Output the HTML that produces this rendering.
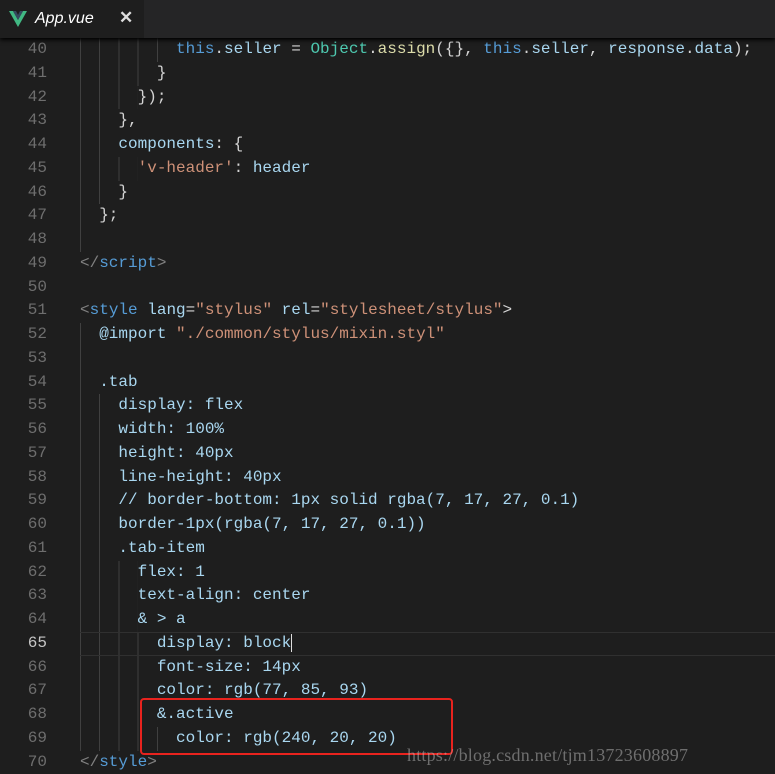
<!DOCTYPE html>
<html><head><meta charset="utf-8"><style>
body{margin:0;width:775px;height:770px;background:#1e1e1e;overflow:hidden;position:relative;font-family:"Liberation Mono",monospace;}
#tabs{position:absolute;left:0;top:0;width:775px;height:38px;background:#252526;box-shadow:0 2px 4px #000;z-index:2}
#tab{position:absolute;left:0;top:0;width:144px;height:38px;background:#1e1e1e;}
#tab .n{position:absolute;left:35px;top:10px;font:italic 16px "Liberation Sans",sans-serif;color:#fff}
#tab .x{position:absolute;left:119px;top:8px;font:bold 17px "Liberation Sans",sans-serif;color:#ddd}
#code{position:absolute;left:0;top:38px;width:775px}
.l{height:23.76px;line-height:23.76px;font-size:16px;white-space:pre;position:relative;color:#d4d4d4;
background:repeating-linear-gradient(to right,#404040 0 1px,transparent 1px 19.2px) no-repeat 80px 0;background-size:calc(var(--g,0)*9.6px) 100%}
.ln{position:absolute;left:0;width:47px;text-align:right;color:#6e6e6e}
.t{position:absolute;left:80px}
.k{color:#569cd6}.p{color:#a9d7f0}.c{color:#4ec9b0}.f{color:#dcdcaa}.s{color:#ce9178}.g{color:#808080}.b{color:#d7ba7d}
.cur{box-shadow:inset 0 1px #303030,inset 0 -1px #303030}
</style></head><body>
<div id="tabs"><div id="tab">
<svg style="position:absolute;left:9px;top:11px" width="18" height="16" viewBox="0 0 18 16"><path d="M0 0h4l5 9 5-9h4L9 16z" fill="#41b883"/><path d="M4 0h3l2 4 2-4h3L9 9z" fill="#35495e"/></svg>
<span class="n">App.vue</span><span class="x">✕</span></div></div>
<div id="code">
<div class="l" style="--g:10"><span class="ln">40</span><span class="t">          <span class="k">this</span>.<span class="p">seller</span> = <span class="c">Object</span>.<span class="f">assign</span>({}, <span class="k">this</span>.<span class="p">seller</span>, <span class="p">response</span>.<span class="p">data</span>);</span></div>
<div class="l" style="--g:8"><span class="ln">41</span><span class="t">        }</span></div>
<div class="l" style="--g:6"><span class="ln">42</span><span class="t">      });</span></div>
<div class="l" style="--g:4"><span class="ln">43</span><span class="t">    },</span></div>
<div class="l" style="--g:4"><span class="ln">44</span><span class="t">    <span class="p">components</span>: {</span></div>
<div class="l" style="--g:6"><span class="ln">45</span><span class="t">      <span class="s">'v-header'</span>: <span class="p">header</span></span></div>
<div class="l" style="--g:4"><span class="ln">46</span><span class="t">    }</span></div>
<div class="l" style="--g:2"><span class="ln">47</span><span class="t">  };</span></div>
<div class="l" style="--g:2"><span class="ln">48</span></div>
<div class="l"><span class="ln">49</span><span class="t"><span class="g">&lt;/</span><span class="k">script</span><span class="g">&gt;</span></span></div>
<div class="l"><span class="ln">50</span></div>
<div class="l"><span class="ln">51</span><span class="t"><span class="g">&lt;</span><span class="k">style</span> <span class="p">lang</span>=<span class="s">"stylus"</span> <span class="p">rel</span>=<span class="s">"stylesheet/stylus"</span>&gt;</span></div>
<div class="l" style="--g:2"><span class="ln">52</span><span class="t">  <span class="p">@import</span> <span class="s">"./common/stylus/mixin.styl"</span></span></div>
<div class="l" style="--g:2"><span class="ln">53</span></div>
<div class="l" style="--g:2"><span class="ln">54</span><span class="t p">  .tab</span></div>
<div class="l" style="--g:4"><span class="ln">55</span><span class="t p">    display: flex</span></div>
<div class="l" style="--g:4"><span class="ln">56</span><span class="t p">    width: 100%</span></div>
<div class="l" style="--g:4"><span class="ln">57</span><span class="t p">    height: 40px</span></div>
<div class="l" style="--g:4"><span class="ln">58</span><span class="t p">    line-height: 40px</span></div>
<div class="l" style="--g:4"><span class="ln">59</span><span class="t p">    // border-bottom: 1px solid rgba(7, 17, 27, 0.1)</span></div>
<div class="l" style="--g:4"><span class="ln">60</span><span class="t p">    border-1px(rgba(7, 17, 27, 0.1))</span></div>
<div class="l" style="--g:4"><span class="ln">61</span><span class="t p">    .tab-item</span></div>
<div class="l" style="--g:6"><span class="ln">62</span><span class="t p">      flex: 1</span></div>
<div class="l" style="--g:6"><span class="ln">63</span><span class="t p">      text-align: center</span></div>
<div class="l" style="--g:6"><span class="ln">64</span><span class="t p">      &amp; &gt; a</span></div>
<div class="l" style="--g:8"><span class="ln" style="color:#c6c6c6">65</span><span class="cur" style="position:absolute;left:80px;right:0;top:0;bottom:0"></span><span class="t p">        display: block<span style="border-left:1.5px solid #ddd"></span></span></div>
<div class="l" style="--g:8"><span class="ln">66</span><span class="t p">        font-size: 14px</span></div>
<div class="l" style="--g:8"><span class="ln">67</span><span class="t p">        color: rgb(77, 85, 93)</span></div>
<div class="l" style="--g:8"><span class="ln">68</span><span class="t p">        &amp;.active</span></div>
<div class="l" style="--g:10"><span class="ln">69</span><span class="t p">          color: rgb(240, 20, 20)</span></div>
<div class="l"><span class="ln">70</span><span class="t"><span class="g">&lt;/</span><span class="k">style</span><span class="g">&gt;</span></span></div>
</div>
<div style="position:absolute;left:140px;top:698px;width:309px;height:53px;border:2.5px solid #e8231e;border-radius:4px"></div>
<div style="position:absolute;left:407px;top:745px;font:18px 'Liberation Serif',serif;color:rgba(190,190,190,0.5);letter-spacing:0.2px">https://blog.csdn.net/tjm13723608897</div>
</body></html>
